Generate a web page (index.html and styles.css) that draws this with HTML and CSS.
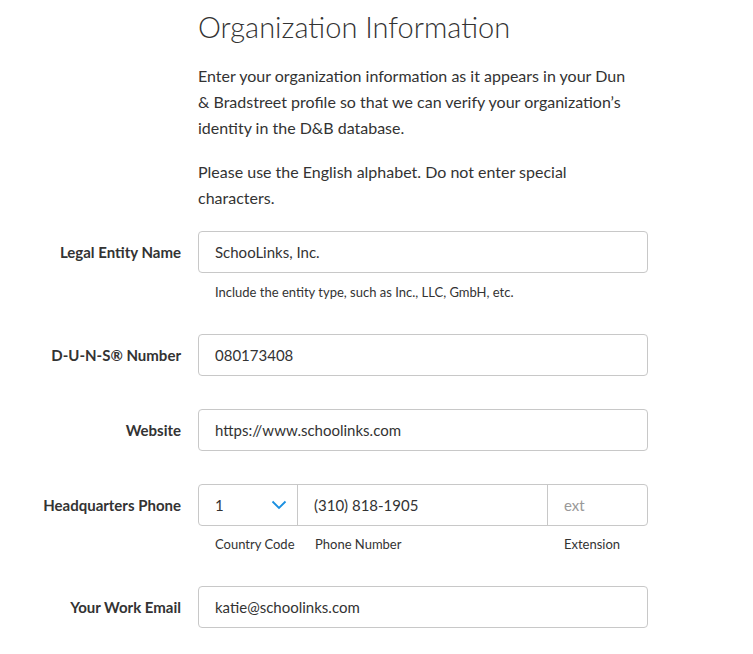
FILE: index.html
```html
<!DOCTYPE html>
<html>
<head>
<meta charset="utf-8">
<link rel="stylesheet" href="styles.css">
</head>
<body>
<div class="form">
  <div class="intro">
    <h1 class="title">Organization Information</h1>
    <p class="para">Enter your organization information as it appears in your Dun &amp; Bradstreet profile so that we can verify your organization’s identity in the D&amp;B database.</p>
    <p class="para">Please use the English alphabet. Do not enter special characters.</p>
  </div>

  <div class="row row-legal">
    <label class="label">Legal Entity Name</label>
    <div class="field">
      <div class="input">SchooLinks, Inc.</div>
      <div class="hint">Include the entity type, such as Inc., LLC, GmbH, etc.</div>
    </div>
  </div>

  <div class="row row-duns">
    <label class="label">D-U-N-S® Number</label>
    <div class="field"><div class="input">080173408</div></div>
  </div>

  <div class="row row-web">
    <label class="label">Website</label>
    <div class="field"><div class="input">https://www.schoolinks.com</div></div>
  </div>

  <div class="row row-phone">
    <label class="label">Headquarters Phone</label>
    <div class="field">
      <div class="phone">
        <div class="seg seg-cc">1
          <svg class="chev" width="16" height="10" viewBox="0 0 16 10"><path d="M1.5 1.5 L8 8 L14.5 1.5" fill="none" stroke="#1a8fe0" stroke-width="1.8"/></svg>
        </div>
        <div class="seg seg-num">(310) 818-1905</div>
        <div class="seg seg-ext">ext</div>
      </div>
      <div class="phone-labels">
        <span class="sub sub-cc">Country Code</span>
        <span class="sub sub-num">Phone Number</span>
        <span class="sub sub-ext">Extension</span>
      </div>
    </div>
  </div>

  <div class="row row-email">
    <label class="label">Your Work Email</label>
    <div class="field"><div class="input">katie@schoolinks.com</div></div>
  </div>
</div>
</body>
</html>
```

FILE: styles.css
```css
html, body {
  margin: 0;
  padding: 0;
  background: #fff;
}
body {
  font-family: Lato, "Open Sans", sans-serif;
  color: #333;
  width: 753px;
  height: 654px;
  overflow: hidden;
}
.form {
  display: flex;
  flex-direction: column;
  padding-top: 8px;
}
.intro {
  margin-left: 198px;
  width: 430px;
}
.title {
  font-weight: 300;
  font-size: 29px;
  line-height: 38px;
  margin: 0 0 17px 0;
  color: #333;
}
.para {
  font-size: 16px;
  line-height: 26px;
  margin: 0 0 18px 0;
  color: #333;
}
.row {
  display: grid;
  grid-template-columns: 181px 450px;
  column-gap: 17px;
}
.label {
  text-align: right;
  font-weight: 700;
  font-size: 15px;
  line-height: 42px;
  color: #333;
}
.input {
  box-sizing: border-box;
  height: 42px;
  border: 1px solid #c8c8c8;
  border-radius: 4px;
  padding: 0 16px;
  font-size: 15px;
  line-height: 40px;
  color: #333;
}
.hint {
  font-size: 13px;
  line-height: 16px;
  margin-top: 11px;
  padding-left: 17px;
  color: #333;
}
.row-legal { margin-top: 2px; }
.row-duns { margin-top: 34px; }
.row-web { margin-top: 33px; }
.row-phone { margin-top: 33px; }
.row-email { margin-top: 34px; }
.phone {
  display: flex;
  height: 42px;
  box-sizing: border-box;
  border: 1px solid #c8c8c8;
  border-radius: 4px;
}
.seg {
  box-sizing: border-box;
  padding: 0 16px;
  font-size: 15px;
  line-height: 40px;
  color: #333;
}
.seg-cc {
  width: 99px;
  border-right: 1px solid #c8c8c8;
  display: flex;
  justify-content: space-between;
  align-items: center;
  padding-right: 10px;
}
.seg-num {
  width: 250px;
  border-right: 1px solid #c8c8c8;
}
.seg-ext {
  flex: 1;
  color: #999;
}
.phone-labels {
  display: flex;
  font-size: 13px;
  line-height: 16px;
  margin-top: 10px;
}
.sub { display: block; }
.sub-cc { width: 99px; padding-left: 17px; box-sizing: border-box; }
.sub-num { width: 250px; padding-left: 18px; box-sizing: border-box; }
.sub-ext { padding-left: 17px; }
```
